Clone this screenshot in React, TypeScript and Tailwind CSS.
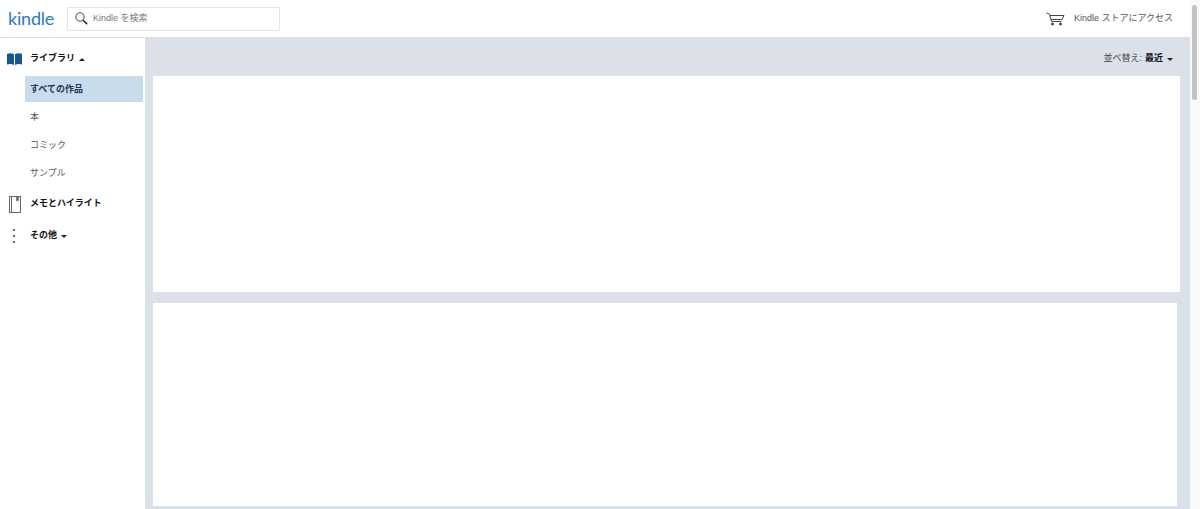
const font = { fontFamily: '"Liberation Sans", "Noto Sans CJK JP", sans-serif' };

const subItems = ["本", "コミック", "サンプル"];

function SearchIcon() {
  return (
    <svg width="13" height="13" viewBox="0 0 13 13" fill="none" className="block">
      <circle cx="5" cy="5" r="4.2" stroke="#444" strokeWidth="1" />
      <path d="M8.2 8.2 L12.2 12.2" stroke="#222" strokeWidth="1.6" />
    </svg>
  );
}

function BookIcon() {
  return (
    <svg width="15" height="12" viewBox="0 0 15 12" className="block">
      <path d="M0 1 C2 0 5 0 7 1.2 V12 C5 10.8 2 10.8 0 11.6 Z" fill="#14588f" />
      <path d="M15 1 C13 0 10 0 8 1.2 V12 C10 10.8 13 10.8 15 11.6 Z" fill="#14588f" />
    </svg>
  );
}

function NotebookIcon() {
  return (
    <svg width="12" height="17" viewBox="0 0 12 17" fill="none" stroke="#666" className="block">
      <rect x="0.5" y="0.5" width="11" height="16" />
      <path d="M2.5 0.5 V16.5" />
      <path d="M7.5 1 V5 L8.5 4 L9.5 5 V1" fill="#666" strokeWidth="0.6" />
    </svg>
  );
}

function CartIcon() {
  return (
    <svg width="19" height="14" viewBox="0 0 19 14" fill="none" stroke="#444" strokeWidth="1" className="block">
      <path d="M0.5 1 L3.5 2.2 L5.5 9.5 H15.5" />
      <path d="M4 3.5 H18 L16 7.5 H5" />
      <circle cx="6.5" cy="12" r="1" fill="#444" />
      <circle cx="14.5" cy="12" r="1" fill="#444" />
    </svg>
  );
}

function Caret({ up = false }: { up?: boolean }) {
  return (
    <span
      className={
        up
          ? "ml-[4px] h-0 w-0 border-x-[3px] border-b-[3px] border-x-transparent border-b-[#222]"
          : "ml-[4px] h-0 w-0 border-x-[3px] border-t-[3px] border-x-transparent border-t-[#222]"
      }
    />
  );
}

export default function App() {
  return (
    <div style={font} className="flex h-[509px] w-[1200px] overflow-hidden bg-white text-[9px] text-[#333]">
      <div className="flex w-[1190px] flex-col">
        <header className="flex h-[38px] shrink-0 items-center border-b border-[#dcdfe3] bg-white pl-[8px] pr-[17px]">
          <span style={{ fontFamily: "Lato, sans-serif" }} className="w-[46px] pb-[2px] text-[18px] leading-none tracking-[-0.2px] text-[#2b7cc1]">
            kindle
          </span>
          <div className="ml-[13px] flex h-[24px] w-[213px] items-center rounded-[1px] border border-[#e2e4e7] pl-[7px]">
            <SearchIcon />
            <span className="ml-[5px] text-[9px] text-[#777]">Kindle を検索</span>
          </div>
          <div className="ml-auto flex items-center">
            <CartIcon />
            <span className="ml-[9px] pt-[1px] text-[9px] text-[#555]">Kindle ストアにアクセス</span>
          </div>
        </header>

        <div className="flex min-h-0 flex-1">
          <aside className="w-[145px] shrink-0 bg-white">
            <div className="flex h-[38px] items-center pl-[7px] pt-[4px]">
              <BookIcon />
              <span className="ml-[8px] font-bold text-[#111]">ライブラリ</span>
              <Caret up />
            </div>
            <div className="ml-[25px] mr-[2px] flex h-[26px] items-center bg-[#c8dcec] pl-[5px] pt-[2px] font-bold text-[#1f3550]">
              すべての作品
            </div>
            {subItems.map((label) => (
              <div key={label} className="ml-[30px] flex h-[28px] items-center pt-[3px] text-[#555]">
                {label}
              </div>
            ))}
            <div className="flex h-[32px] items-center pl-[9px] pt-[4px]">
              <NotebookIcon />
              <span className="ml-[9px] font-bold text-[#111]">メモとハイライト</span>
            </div>
            <div className="flex h-[32px] items-center pl-[13px] pt-[4px]">
              <div className="flex h-[14px] flex-col justify-between">
                <span className="h-[2px] w-[2px] rounded-full bg-[#333]" />
                <span className="h-[2px] w-[2px] rounded-full bg-[#333]" />
                <span className="h-[2px] w-[2px] rounded-full bg-[#333]" />
              </div>
              <span className="ml-[15px] font-bold text-[#111]">その他</span>
              <Caret />
            </div>
          </aside>

          <main className="min-w-0 flex-1 bg-[#dce1e9] pl-[8px]">
            <div className="flex h-[38px] items-center justify-end pr-[17px] pt-[4px]">
              <span className="text-[#444]">並べ替え:</span>
              <span className="ml-[3px] font-bold text-[#111]">最近</span>
              <Caret />
            </div>
            <div className="mr-[10px] h-[216px] bg-white" />
            <div className="mr-[13px] mt-[11px] h-[203px] bg-white" />
          </main>
        </div>
      </div>

      <div className="w-[10px] shrink-0 bg-[#fafafa] pl-[2px] pt-[5px]">
        <div className="h-[95px] w-[5px] rounded-full bg-[#c2c2c2]" />
      </div>
    </div>
  );
}
